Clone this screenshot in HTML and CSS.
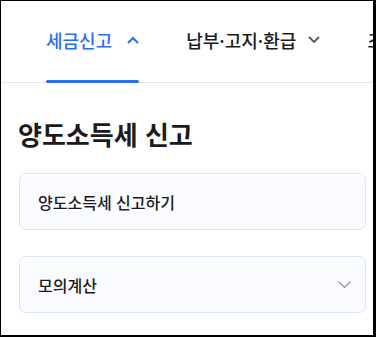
FILE: index.html
```html
<!DOCTYPE html>
<html lang="ko">
<head>
  <meta charset="UTF-8" />
  <meta name="viewport" content="width=device-width, initial-scale=1.0" />
  <title>양도소득세 신고</title>
  <link rel="stylesheet" href="styles.css">
</head>
<body>
  <div class="frame">
    <nav class="tabs">
      <a class="tab active" href="#">
        세금신고
        <svg class="chev" width="12" height="8" viewBox="0 0 12 8"><path d="M1 7 L6 2 L11 7" fill="none" stroke="currentColor" stroke-width="2"/></svg>
      </a>
      <a class="tab narrow" href="#">
        납부·고지·환급
        <svg class="chev gray" width="12" height="8" viewBox="0 0 12 8"><path d="M1 1 L6 6 L11 1" fill="none" stroke="currentColor" stroke-width="1.8"/></svg>
      </a>
      <a class="tab" href="#">조회·발급</a>
    </nav>

    <main class="content">
      <h1>양도소득세 신고</h1>
      <a class="card" href="#">양도소득세 신고하기</a>
      <button class="card select">
        <span>모의계산</span>
        <svg width="13" height="8" viewBox="0 0 13 8"><path d="M0.5 0.5 L6.5 6.5 L12.5 0.5" fill="none" stroke="#8a8d94" stroke-width="1.2"/></svg>
      </button>
    </main>
  </div>
</body>
</html>
```

FILE: styles.css
```css
* { box-sizing: border-box; margin: 0; padding: 0; }
html, body { height: 100%; background: #fff; font-family: "Noto Sans CJK KR", "Noto Sans", sans-serif; color: #1b1b1b; }
a { color: inherit; text-decoration: none; }

.frame {
  width: 376px; height: 337px; overflow: hidden;
  border-style: solid; border-color: #000;
  border-width: 1px 3px 2px 1px;
}

.tabs {
  display: flex; gap: 47px; height: 82px; padding-left: 45px;
  border-bottom: 1px solid #e8e8e8; white-space: nowrap;
}
.tab {
  position: relative; display: flex; align-items: center; gap: 15px;
  font-size: 18px; font-weight: 500; padding-bottom: 4px;
}
.tab.narrow { gap: 12px; }
.tab.active { color: #2a6ef0; }
.tab.active::after {
  content: ""; position: absolute; left: 0; right: 0; bottom: -1px;
  height: 3px; border-radius: 2px; background: #2a6ef0;
}
.chev { flex: none; }
.chev.gray { color: #55585e; }

.content { padding: 34px 7px 0 18px; }
.content h1 {
  font-size: 26px; font-weight: 700; line-height: 34px; margin-left: -1px;
  margin-bottom: 22px;
}
.card {
  display: flex; align-items: center; justify-content: space-between;
  width: 100%; height: 57px; padding: 0 14px 0 18px;
  background: #fafcff; border: 1px solid #d8e4f8; border-radius: 7px;
  font-family: inherit; font-size: 16px; font-weight: 500; color: #1b1b1b;
  text-align: left; cursor: pointer;
}
.card + .card { margin-top: 26px; }
```
